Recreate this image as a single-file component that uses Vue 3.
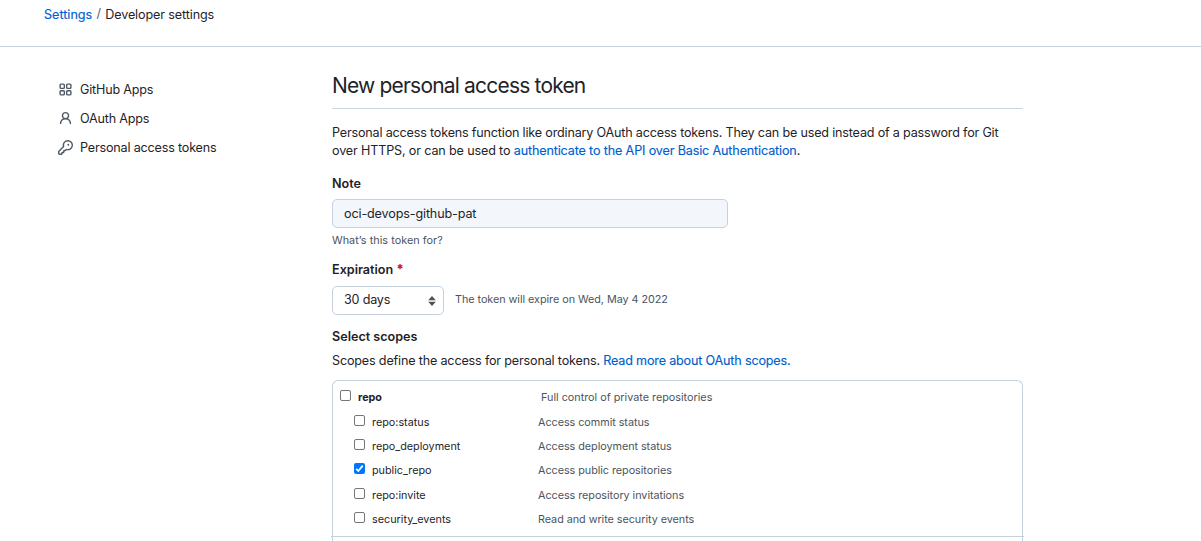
<script setup>
const scopes = [
  { name: 'repo:status', text: 'Access commit status', checked: false },
  { name: 'repo_deployment', text: 'Access deployment status', checked: false },
  { name: 'public_repo', text: 'Access public repositories', checked: true },
  { name: 'repo:invite', text: 'Access repository invitations', checked: false },
  { name: 'security_events', text: 'Read and write security events', checked: false },
]
</script>

<template>
  <div class="page">
    <header class="crumbs">
      <a class="link">Settings</a><span class="slash">/</span><span class="here">Developer settings</span>
    </header>
    <div class="body">
      <nav class="side">
        <a class="item">
          <svg class="icon" viewBox="0 0 16 16"><path d="M1.5 3.25c0-.966.784-1.75 1.75-1.75h2.5c.966 0 1.75.784 1.75 1.75v2.5A1.75 1.75 0 015.75 7.500h-2.5A1.75 1.75 0 011.500 5.750v-2.500zM3.250 3a.25.25 0 00-.25.25v2.500c0 .138.112.25.25.25h2.500A.25.25 0 006 5.750v-2.500A.25.25 0 005.750 3h-2.500zM8.500 3.250c0-.966.784-1.750 1.750-1.750h2.500c.966 0 1.750.784 1.750 1.750v2.500a1.750 1.750 0 01-1.750 1.750h-2.500A1.750 1.750 0 018.500 5.750v-2.500zM10.250 3a.25.25 0 00-.25.25v2.500c0 .138.112.25.25.25h2.500a.25.25 0 00.25-.25v-2.500a.25.25 0 00-.25-.25h-2.500zM1.500 10.250c0-.966.784-1.750 1.750-1.750h2.500c.966 0 1.750.784 1.750 1.750v2.500a1.750 1.750 0 01-1.750 1.750h-2.500a1.750 1.750 0 01-1.750-1.750v-2.500zM3.250 10a.25.25 0 00-.25.25v2.500c0 .138.112.25.25.25h2.500a.25.25 0 00.25-.25v-2.500a.25.25 0 00-.25-.25h-2.500zM8.500 10.250c0-.966.784-1.750 1.750-1.750h2.500c.966 0 1.750.784 1.750 1.750v2.500a1.750 1.750 0 01-1.750 1.750h-2.500a1.750 1.750 0 01-1.750-1.750v-2.500zM10.250 10a.25.25 0 00-.25.25v2.500c0 .138.112.25.25.25h2.500a.25.25 0 00.25-.25v-2.500a.25.25 0 00-.25-.25h-2.500z" fill-rule="evenodd" /></svg>
          <span>GitHub Apps</span>
        </a>
        <a class="item">
          <svg class="icon" viewBox="0 0 16 16"><path d="M10.500 5a2.500 2.500 0 11-5 0 2.500 2.500 0 015 0zm.061 3.073a4 4 0 10-5.123 0 6.004 6.004 0 00-3.431 5.142.75.75 0 001.498.070 4.500 4.500 0 018.990 0 .75.75 0 101.498-.070 6.005 6.005 0 00-3.432-5.142z" fill-rule="evenodd" /></svg>
          <span>OAuth Apps</span>
        </a>
        <a class="item">
          <svg class="icon" viewBox="0 0 16 16"><path d="M6.500 5.500a4 4 0 112.731 3.795.75.75 0 00-.768.180L7.440 10.500H6.250a.75.75 0 00-.75.75v1.190l-.06.060H4.250a.75.75 0 00-.75.75v1.190l-.06.060H1.750a.25.25 0 01-.25-.25v-1.690l5.024-5.023a.75.75 0 00.181-.768A3.995 3.995 0 016.500 5.500zm4-5.500a5.500 5.500 0 00-5.348 6.788L.220 11.720a.75.75 0 00-.220.530v2C0 15.216.784 16 1.750 16h2a.75.75 0 00.530-.220l.500-.500a.75.75 0 00.220-.530V14h.750a.75.75 0 00.530-.220l.500-.500a.75.75 0 00.220-.530V12h.750a.75.75 0 00.530-.220l.932-.932A5.500 5.500 0 1010.500 0zm.500 6a1 1 0 100-2 1 1 0 000 2z" fill-rule="evenodd" /></svg>
          <span>Personal access tokens</span>
        </a>
      </nav>
      <main class="main">
        <h1 class="title">New personal access token</h1>
        <p class="intro">
          <span class="intro-a">Personal access tokens function like ordinary OAuth access tokens. They can be used instead of a password for Git</span><br>
          <span class="intro-b">over HTTPS, or can be used to <a class="link">authenticate to the API over Basic Authentication</a>.</span>
        </p>
        <div class="label">Note</div>
        <div class="field">oci-devops-github-pat</div>
        <div class="hint">What’s this token for?</div>
        <div class="label exp">Expiration <b class="req">*</b></div>
        <div class="expire">
          <div class="select">
            <span>30 days</span>
            <svg class="arrows" viewBox="0 0 8 10"><path d="M4 0 7.800 4.200H.2zM4 10 .2 5.800h7.600z" /></svg>
          </div>
          <span class="small">The token will expire on Wed, May 4 2022</span>
        </div>
        <div class="label scopes-label">Select scopes</div>
        <div class="define">Scopes define the access for personal tokens. <a class="link">Read more about OAuth scopes.</a></div>
        <section class="box">
          <div class="row parent">
            <span class="check"></span><b class="name">repo</b><span class="small">Full control of private repositories</span>
          </div>
          <div v-for="s in scopes" :key="s.name" class="row child">
            <span class="check" :class="{ on: s.checked }">
              <svg v-if="s.checked" class="tick" viewBox="0 0 11 11"><path d="M2.200 5.900 4.300 8 8.700 2.600" /></svg>
            </span>
            <span class="name">{{ s.name }}</span><span class="small">{{ s.text }}</span>
          </div>
          <div class="rule"></div>
        </section>
      </main>
    </div>
  </div>
</template>

<style>
body { background: #fff; overflow: hidden; }
</style>

<style scoped>
.page { width: 1201px; height: 541px; overflow: hidden; font-family: Inter, "Liberation Sans", sans-serif; font-size: 12.6px; color: #1f2328; line-height: 18px; white-space: nowrap; }
.link { color: #0060d0; -webkit-text-stroke: 0.15px #0060d0; }
.crumbs { box-sizing: border-box; height: 47px; padding: 6px 0 0 44px; border-bottom: 1px solid #c9d3dc; display: flex; }
.slash { width: 13px; text-align: center; color: #57606a; position: relative; top: -1px; }
.here { letter-spacing: -0.12px; }
.body { display: flex; }
.side { width: 274px; padding: 28px 0 0 58px; display: flex; flex-direction: column; letter-spacing: -0.19px; }
.item { height: 29px; display: flex; align-items: center; gap: 7px; }
.icon { width: 15px; height: 15px; fill: #4f5964; }
.main { width: 691px; display: flex; flex-direction: column; }
.title { box-sizing: border-box; margin: 0; height: 62px; padding-top: 24px; border-bottom: 1px solid #ccd5dd; font-size: 21px; line-height: 30px; font-weight: 400; letter-spacing: -0.81px; }
.intro { margin: 15px 0 0; }
.intro-a { letter-spacing: -0.187px; }
.intro-b { letter-spacing: -0.15px; }
.label { margin-top: 15px; font-weight: 600; }
.field { box-sizing: border-box; width: 396px; height: 29px; margin-top: 6px; padding: 0 11px; border: 1px solid #c5d1dc; border-radius: 5px; background: #f3f7fb; line-height: 27px; letter-spacing: -0.14px; }
.hint { margin-top: 4px; color: #4b545e; font-size: 10.8px; letter-spacing: 0.05px; }
.exp { margin-top: 11px; }
.req { color: #cf222e; }
.expire { display: flex; margin-top: 7px; gap: 11px; align-items: center; }
.select { box-sizing: border-box; width: 112px; height: 29px; padding: 0 7px 2px 11px; border: 1px solid #c5d1dc; border-radius: 5px; display: flex; align-items: center; justify-content: space-between; letter-spacing: -0.2px; }
.arrows { width: 8px; height: 10px; fill: #4b535b; position: relative; top: 1px; }
.small { color: #4b545e; font-size: 10.8px; letter-spacing: -0.04px; }
.expire .small { position: relative; top: -1px; }
.scopes-label { margin-top: 13px; }
.define { margin-top: 6px; letter-spacing: -0.175px; }
.box { box-sizing: border-box; height: 190px; margin-top: 10px; padding-top: 6px; border: 1px solid #c5d1dc; border-bottom: 0; border-radius: 6px 6px 0 0; font-size: 10.8px; }
.row { display: flex; height: 24.3px; line-height: 22px; }
.parent { padding-left: 7px; height: 24.8px; }
.parent .small { letter-spacing: 0; }
.child { padding-left: 21px; }
.check { box-sizing: border-box; width: 11px; height: 11px; margin: 3px 7px 0 0; border: 1px solid #767676; border-radius: 2px; }
.check.on { border: 0; background: #0075ff; display: flex; }
.tick { width: 11px; height: 11px; fill: none; stroke: #fff; stroke-width: 1.7; }
.name { width: 166px; }
.parent .name { width: 183px; }
.rule { height: 1px; margin: 2.7px -2px 0; background: #c5d1dc; }
</style>
